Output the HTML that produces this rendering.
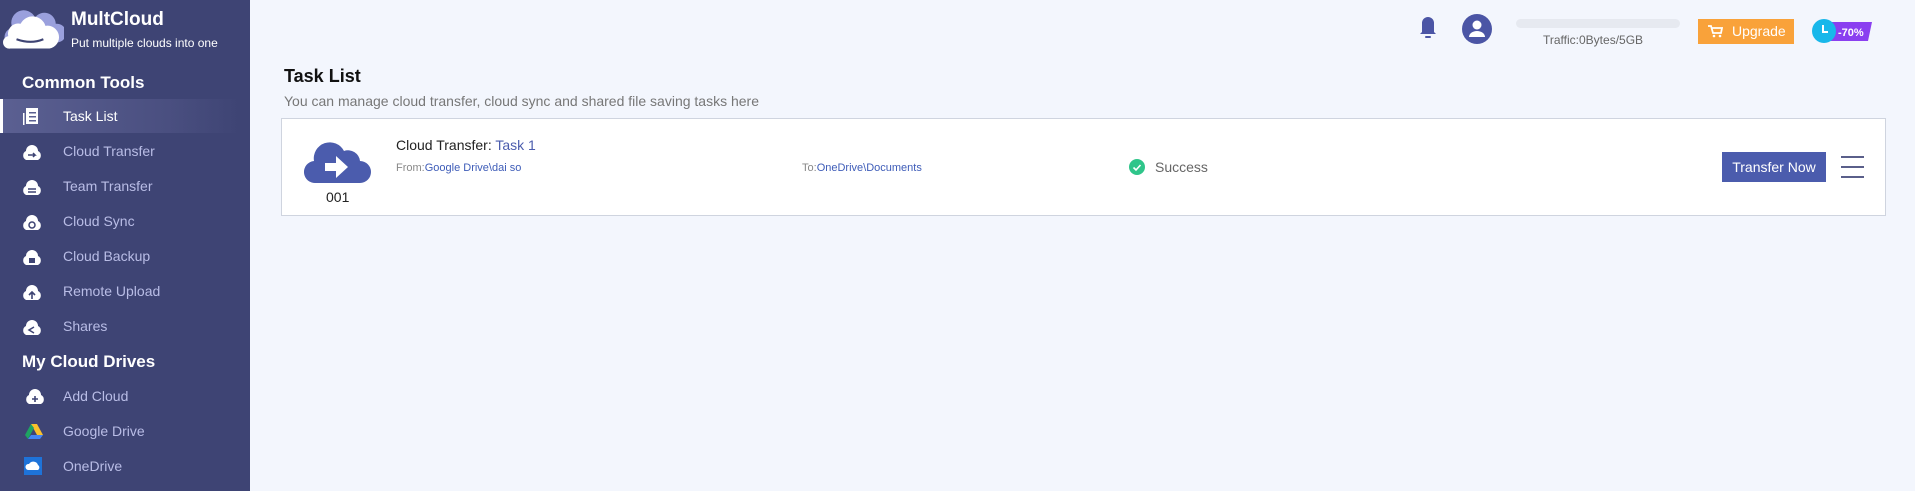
<!DOCTYPE html>
<html><head><meta charset="utf-8"><style>
*{margin:0;padding:0;box-sizing:border-box}
body{width:1915px;height:491px;background:#f3f6fd;font-family:"Liberation Sans",sans-serif;position:relative;overflow:hidden}
.sb{position:absolute;left:0;top:0;width:250px;height:491px;background:#3e4474}
.a{position:absolute}
.it{position:absolute;left:63px;font-size:14px;color:#b9bde6}
.ic{position:absolute;left:21px;width:22px;height:16px}
.h{position:absolute;left:22px;color:#fff;font-weight:bold;font-size:17px}
</style></head><body>
<div class="sb">
<svg class="a" style="left:0;top:5px" width="64" height="52" viewBox="0 0 62 50"><path d="M12 22a12 12 0 0 1 22-10a11 11 0 0 1 20 6a9 9 0 0 1 2 18H6a9 9 0 0 1 6-14z" fill="#9aa0dd"/><path d="M8 30a10 10 0 0 1 12-12a13 13 0 0 1 24 2a10 10 0 0 1 4 22H10a6 6 0 0 1-2-12z" fill="#fff"/><path d="M16 33q14 5 26 0" stroke="#3e4474" stroke-width="2" fill="none"/></svg>
<div class="a" style="left:71px;top:9px;color:#fff;font-weight:bold;font-size:19px">MultCloud</div>
<div class="a" style="left:71px;top:36px;color:#fff;font-size:12px">Put multiple clouds into one</div>
<div class="h" style="top:73px">Common Tools</div>
<div class="a" style="left:0;top:99px;width:240px;height:34px;background:linear-gradient(90deg,#5b6092,#4a4f80 70%,#3e4474)"></div>
<div class="a" style="left:0;top:99px;width:3px;height:34px;background:#fff"></div>
<svg class="a" style="left:22px;top:107px" width="20" height="18"><rect x="4" y="1" width="12" height="16" fill="#fff"/><rect x="7" y="5" width="7" height="1.5" fill="#5b6092"/><rect x="7" y="9" width="7" height="1.5" fill="#5b6092"/><rect x="7" y="13" width="7" height="1.5" fill="#5b6092"/><rect x="1" y="6" width="1.5" height="12" fill="#fff"/></svg>
<div class="it" style="top:108px;color:#fff">Task List</div>
<svg width="0" height="0"><defs><path id="c" d="M5 16a5 5 0 0 1 0-9a6 6 0 0 1 12 0a5 5 0 0 1 0 9z" fill="#fff"/></defs></svg>
<svg class="ic" style="top:144px"><use href="#c"/><path d="M7 11h7l-2-2M14 11l-2 2" stroke="#3e4474" stroke-width="1.5" fill="none"/></svg><div class="it" style="top:143px">Cloud Transfer</div>
<svg class="ic" style="top:179px"><use href="#c"/><path d="M7 10h8M7 13h8" stroke="#3e4474" stroke-width="1.5"/></svg><div class="it" style="top:178px">Team Transfer</div>
<svg class="ic" style="top:214px"><use href="#c"/><circle cx="11" cy="11" r="3" stroke="#3e4474" stroke-width="1.5" fill="none"/></svg><div class="it" style="top:213px">Cloud Sync</div>
<svg class="ic" style="top:249px"><use href="#c"/><rect x="8" y="9" width="6" height="5" fill="#3e4474"/></svg><div class="it" style="top:248px">Cloud Backup</div>
<svg class="ic" style="top:284px"><use href="#c"/><path d="M11 15V9M8 11l3-3 3 3" stroke="#3e4474" stroke-width="1.6" fill="none"/></svg><div class="it" style="top:283px">Remote Upload</div>
<svg class="ic" style="top:319px"><use href="#c"/><path d="M13 8l-5 3 5 3" stroke="#3e4474" stroke-width="1.5" fill="none"/></svg><div class="it" style="top:318px">Shares</div>
<div class="h" style="top:352px">My Cloud Drives</div>
<svg class="ic" style="top:388px;left:24px"><use href="#c"/><path d="M11 8v6M8 11h6" stroke="#3e4474" stroke-width="1.6"/></svg><div class="it" style="top:388px">Add Cloud</div>
<svg class="ic" style="top:423px;left:24px"><path d="M7 1h6l6 11h-6z" fill="#f9c02b"/><path d="M7 1L1 12l3 4 6-11z" fill="#1ea362"/><path d="M4 16h12l3-4H7z" fill="#4285f4"/></svg><div class="it" style="top:423px">Google Drive</div>
<svg class="ic" style="top:457px;left:24px;height:18px"><rect width="18" height="18" fill="#1e73d9"/><path d="M4 13a3 3 0 0 1 1-6a5 5 0 0 1 9 1a3 3 0 0 1 0 5z" fill="#fff"/></svg><div class="it" style="top:458px">OneDrive</div>
</div>

<svg class="a" style="left:1419px;top:15px" width="18" height="26"><path d="M9 2a6 6 0 0 1 6 6v9l2 2H1l2-2V8a6 6 0 0 1 6-6z" fill="#4b55a5"/><rect x="6" y="21" width="6" height="2" rx="1" fill="#4b55a5"/></svg>
<div class="a" style="left:1462px;top:14px;width:30px;height:30px;border-radius:50%;background:#4b55a5"></div>
<svg class="a" style="left:1462px;top:14px" width="30" height="30"><circle cx="15" cy="11" r="4.5" fill="#fff"/><path d="M7 23a8 6 0 0 1 16 0z" fill="#fff"/></svg>
<div class="a" style="left:1516px;top:19px;width:164px;height:9px;border-radius:5px;background:#e6e9f0"></div>
<div class="a" style="left:1543px;top:33px;font-size:12px;color:#666">Traffic:0Bytes/5GB</div>
<div class="a" style="left:1698px;top:19px;width:96px;height:25px;background:#f9a23a;color:#fff;font-size:14px;line-height:25px;padding-left:34px">Upgrade</div>
<svg class="a" style="left:1707px;top:24px" width="16" height="14"><path d="M1 2h3l2 7h8l1-5H5" stroke="#fff" stroke-width="1.8" fill="none"/><circle cx="7" cy="12" r="1.3" fill="#fff"/><circle cx="13" cy="12" r="1.3" fill="#fff"/></svg>
<svg class="a" style="left:1810px;top:13px" width="64" height="34"><path d="M22 9h40l-4 19H20z" fill="#8a3ff0"/><circle cx="14" cy="18" r="12" fill="#18b7ea"/><path d="M13 12v7h5" stroke="#fff" stroke-width="2" fill="none"/><text x="28" y="23" font-size="11" font-weight="bold" fill="#fff" font-family="Liberation Sans">-70%</text></svg>

<div class="a" style="left:284px;top:66px;font-size:18px;font-weight:bold;color:#111">Task List</div>
<div class="a" style="left:284px;top:93px;font-size:14px;color:#777">You can manage cloud transfer, cloud sync and shared file saving tasks here</div>
<div class="a" style="left:281px;top:118px;width:1605px;height:98px;background:#fff;border:1px solid #cfd4df"></div>
<svg class="a" style="left:304px;top:139px" width="68" height="46"><path d="M12 44a11 11 0 0 1-2-22a16 16 0 0 1 30-10a12 12 0 0 1 16 10a11 11 0 0 1 0 22z" fill="#4b5cad"/><path d="M21 24h11v-7l12 11-12 11v-7H21z" fill="#fff"/></svg>
<div class="a" style="left:326px;top:189px;font-size:14px;color:#222">001</div>
<div class="a" style="left:396px;top:137px;font-size:14px;color:#222">Cloud Transfer: <span style="color:#4b5cad">Task 1</span></div>
<div class="a" style="left:396px;top:162px;font-size:11px;color:#888">From:<span style="color:#3e5cb8">Google Drive\dai so</span></div>
<div class="a" style="left:802px;top:162px;font-size:11px;color:#888">To:<span style="color:#3e5cb8">OneDrive\Documents</span></div>
<div class="a" style="left:1129px;top:159px;width:16px;height:16px;border-radius:50%;background:#2fc58a"></div>
<svg class="a" style="left:1129px;top:159px" width="16" height="16"><path d="M4.5 8.5l2.5 2.5 4.5-5" stroke="#fff" stroke-width="1.6" fill="none"/></svg>
<div class="a" style="left:1155px;top:159px;font-size:14px;color:#666">Success</div>
<div class="a" style="left:1722px;top:152px;width:104px;height:30px;background:#4b5cad;color:#fff;font-size:14px;line-height:30px;text-align:center">Transfer Now</div>
<div class="a" style="left:1841px;top:156px;width:23px;height:2px;background:#5a5f8a"></div>
<div class="a" style="left:1841px;top:166px;width:23px;height:2px;background:#5a5f8a"></div>
<div class="a" style="left:1841px;top:176px;width:23px;height:2px;background:#5a5f8a"></div>
</body></html>
